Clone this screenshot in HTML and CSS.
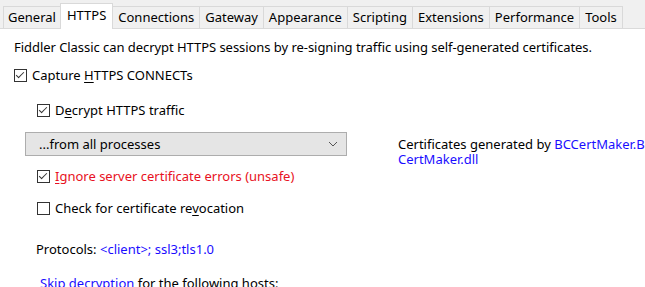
FILE: index.html
```html
<!DOCTYPE html>
<html>
  <head>
    <title>Fiddler Options - HTTPS</title>
    <meta charset="UTF-8" />
    <link rel="stylesheet" href="styles.css">
  </head>
  <body>
    <div class="tabs">
      <div class="tab">General</div>
      <div class="tab active">HTTPS</div>
      <div class="tab">Connections</div>
      <div class="tab">Gateway</div>
      <div class="tab">Appearance</div>
      <div class="tab">Scripting</div>
      <div class="tab">Extensions</div>
      <div class="tab">Performance</div>
      <div class="tab">Tools</div>
    </div>

    <div class="panel">
      <p class="intro">
        Fiddler Classic can decrypt HTTPS sessions by re-signing traffic using self-generated certificates.
      </p>

      <label class="check top">
        <span class="box on"></span>
        <span>Capture <u>H</u>TTPS CONNECTs</span>
      </label>

      <label class="check sub decrypt">
        <span class="box on"></span>
        <span>D<u>e</u>crypt HTTPS traffic</span>
      </label>

      <div class="row">
        <div class="select">
          <span>...from all processes</span>
          <svg width="10" height="6" viewBox="0 0 10 6">
            <path d="M1 1 L5 5 L9 1" fill="none" stroke="#555" stroke-width="1" />
          </svg>
        </div>
        <div class="certs">
          Certificates generated by <a>BCCertMaker.BCCertMaker.dll</a>
        </div>
      </div>

      <label class="check sub danger">
        <span class="box on"></span>
        <span><u>I</u>gnore server certificate errors (unsafe)</span>
      </label>

      <label class="check sub revoke">
        <span class="box"></span>
        <span>Check for certificate re<u>v</u>ocation</span>
      </label>

      <p class="protocols">Protocols: <a>&lt;client&gt;; ssl3;tls1.0</a></p>

      <p class="skip"><a>Skip decryption</a> for the following hosts:</p>
    </div>
  </body>
</html>
```

FILE: styles.css
```css
html,
body {
  overflow: hidden;
}

body {
  font-family: "Noto Sans", "Open Sans", sans-serif;
  font-size: 13px;
  color: #000;
  margin: 0;
  background: #fff;
  width: 645px;
  height: 287px;
}

u {
  text-decoration-thickness: 1px;
  text-underline-offset: 2px;
}

a {
  color: #1a0dff;
}

.tabs {
  display: flex;
  align-items: flex-end;
  height: 28px;
  padding-left: 3px;
  background: #f0f0f0;
  border-bottom: 1px solid #dadada;
}

.tab {
  height: 22px;
  line-height: 21px;
  padding: 0 5px;
  background: #f0f0f0;
  border: 1px solid #d9d9d9;
  border-bottom: none;
  border-left: none;
  box-sizing: border-box;
}

.tab:first-child {
  border-left: 1px solid #d9d9d9;
  padding: 0 4px;
}

.tab.active {
  height: 26px;
  line-height: 23px;
  margin-bottom: -1px;
  margin-left: -1px;
  padding: 0 6px;
  background: #fff;
  border: 1px solid #d9d9d9;
  border-bottom: none;
}

.panel {
  padding-left: 14px;
}

.intro {
  margin: 10px 0 0;
  line-height: 16px;
  white-space: nowrap;
  letter-spacing: -0.05px;
}

.check {
  display: flex;
  align-items: center;
  gap: 5px;
  height: 16px;
  white-space: nowrap;
}

.box {
  flex: none;
  width: 11px;
  height: 11px;
  border: 1px solid #333;
  background: #fff;
  position: relative;
}

.box.on::after {
  content: "";
  position: absolute;
  left: 3px;
  top: 0;
  width: 3px;
  height: 7px;
  border: solid #333;
  border-width: 0 1px 1px 0;
  transform: rotate(45deg);
}

.top {
  margin-top: 12px;
}

.sub {
  margin-left: 23px;
}

.decrypt {
  margin-top: 19px;
}

.row {
  display: flex;
  align-items: flex-start;
  height: 24px;
  margin-top: 14px;
}

.select {
  flex: none;
  display: flex;
  align-items: center;
  justify-content: space-between;
  width: 322px;
  height: 24px;
  margin-left: 11px;
  padding: 0 8px 0 13px;
  box-sizing: border-box;
  background: #e5e5e5;
  border: 1px solid #adadad;
}

.certs {
  flex: none;
  margin-left: 51px;
  margin-top: 5px;
  width: 258px;
  line-height: 15px;
  word-break: break-all;
}

.danger {
  margin-top: 12px;
  color: #e81123;
}

.revoke {
  margin-top: 16px;
}

.protocols {
  margin: 25px 0 0 22px;
  line-height: 16px;
}

.skip {
  margin: 18px 0 0 26px;
  line-height: 16px;
}
```
